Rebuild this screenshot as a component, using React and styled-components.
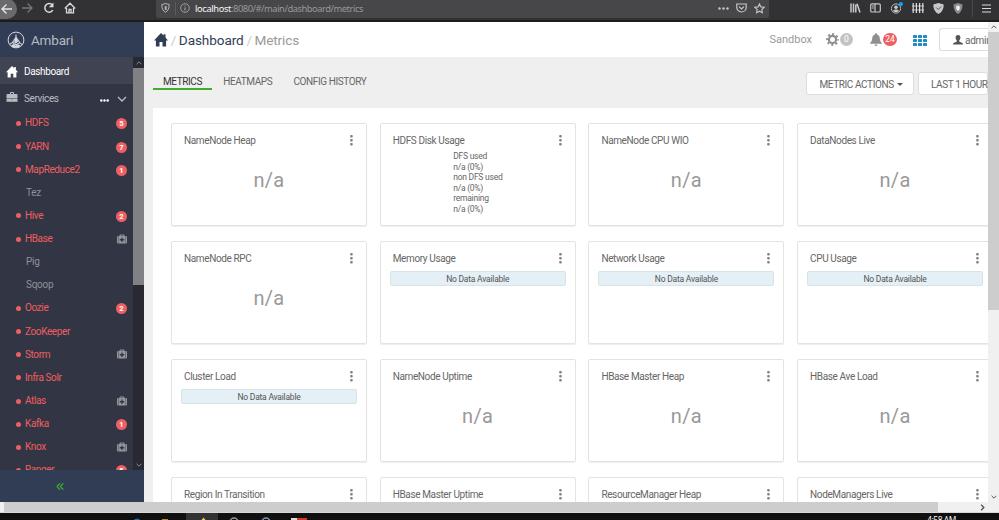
import React from 'react';
import styled, { createGlobalStyle, css } from 'styled-components';

const GlobalStyle = createGlobalStyle`
  * { box-sizing: border-box; }
  body {
    margin: 0;
    overflow: hidden;
    font-family: Roboto, "Liberation Sans", sans-serif;
    font-size: 10px;
    color: #666;
  }
  svg { display: block; flex: none; }
`;

const StScreen = styled.div`
  display: flex;
  flex-direction: column;
  width: 999px;
  height: 520px;
  overflow: hidden;
  background: #fff;
`;

/* browser toolbar */
const StBrowserBar = styled.div`
  display: flex;
  flex: none;
  height: 22px;
  background: #323234;
  border-bottom: 2px solid #1c1c1e;
`;
const StNavButtons = styled.div`
  display: flex;
  width: 156px;
  padding-top: 2px;
  gap: 9px;
`;
const StBackButton = styled.div`
  width: 17px;
  height: 20px;
  margin: -3px -5px 0 0;
  border-radius: 0 10px 10px 0;
  background: #6a6a6c;
  padding: 3px 0 0 1px;
`;
const StUrlField = styled.div`
  display: flex;
  align-items: center;
  width: 613px;
  height: 18px;
  padding: 0 4px 2px 5px;
  background: #474749;
  border-radius: 0 0 2px 2px;
`;
const StUrlDivider = styled.i`
  width: 1px;
  height: 13px;
  margin: 0 4px 0 5px;
  background: #5c5c5e;
`;
const StUrl = styled.span`
  flex: 1;
  margin: 2px 0 0 5px;
  font: 9.3px "Noto Sans", sans-serif;
  line-height: 16px;
  color: #98989a;
  letter-spacing: -.44px;
  b { font-weight: 400; color: #f5f5f6; letter-spacing: -.37px; }
`;
const StUrlActions = styled.div`
  display: flex;
  align-items: center;
  gap: 7px;
`;
const StExtensions = styled.div`
  display: flex;
  flex: 1;
  align-items: center;
  justify-content: flex-end;
  gap: 9px;
  height: 16px;
  padding-right: 8px;
`;
const StExtDivider = styled.i`
  width: 1px;
  height: 18px;
  background: #4a4a4c;
`;

/* page */
const StPage = styled.div`
  display: flex;
  flex: none;
  height: 480px;
  overflow: hidden;
`;
const StSidebar = styled.aside`
  display: flex;
  flex-direction: column;
  flex: none;
  width: 144px;
  background: #323544;
`;
const StBrand = styled.div`
  display: flex;
  align-items: center;
  flex: none;
  height: 35px;
  padding-left: 7px;
  gap: 6px;
  background: #313d54;
  color: #b5bac4;
  font-size: 13.5px;
  letter-spacing: -.2px;
`;
const StSideBody = styled.div`
  display: flex;
  flex: none;
  height: 413px;
`;
const StMenu = styled.nav`
  width: 133px;
  overflow: hidden;
`;
const StMenuHead = styled.div`
  display: flex;
  align-items: center;
  height: 27px;
  padding: 2px 6px 0 6px;
  gap: 6px;
  font-size: 10px;
  letter-spacing: -.38px;
  color: ${({ $active }) => ($active ? '#fff' : '#b8bdc3')};
  background: ${({ $active }) => ($active ? '#404351' : 'transparent')};
`;
const StMenuTools = styled.div`
  display: flex;
  align-items: center;
  gap: 8px;
  margin-left: auto;
  svg:first-child { margin-top: 4px; }
`;
const StServiceList = styled.div`
  padding-top: .3px;
`;
const StService = styled.div`
  display: flex;
  align-items: center;
  height: 23.15px;
  padding: 0 6px 0 16px;
  font-size: 10px;
  letter-spacing: ${({ $alert }) => ($alert ? '-.38px' : '-.25px')};
  color: ${({ $alert }) => ($alert ? '#ef5f62' : '#8f9299')};
`;
const StStatusDot = styled.i`
  width: 5px;
  height: 5px;
  margin: 1px ${({ $alert }) => ($alert ? '4px' : '5px')} 0 0;
  border-radius: 50%;
  background: ${({ $alert }) => ($alert ? '#ef5f62' : 'transparent')};
`;
const StServiceName = styled.span`flex: 1;`;
const StCount = styled.span`
  width: 11px;
  height: 11px;
  margin-top: 2px;
  border-radius: 50%;
  background: #ef5f62;
  color: #fff;
  font-size: 7.5px;
  font-weight: 700;
  line-height: 11px;
  letter-spacing: 0;
  text-align: center;
`;
const StSideScroll = styled.div`
  display: flex;
  flex-direction: column;
  justify-content: space-between;
  width: 11px;
  background: #282933;
`;
const StSideArrow = styled.div`
  display: flex;
  align-items: center;
  justify-content: center;
  height: 11px;
  color: #8c8c92;
`;
const StSideThumb = styled.div`
  height: 217px;
  margin-bottom: auto;
  background: #808185;
`;
const StSideFooter = styled.div`
  display: flex;
  align-items: center;
  flex: 1;
  padding: 1px 0 0 56px;
  background: #313d54;
`;

const StMain = styled.main`
  flex: 1;
  min-width: 0;
  overflow: hidden;
  background: #efefef;
`;
const StHeader = styled.header`
  display: flex;
  align-items: center;
  height: 35px;
  padding-left: 10px;
  background: #fff;
`;
const StCrumbs = styled.div`
  display: flex;
  align-items: center;
  flex: 1;
  gap: 2.7px;
  font-size: 13.6px;
  letter-spacing: -.15px;
  color: #999;
  strong { font-weight: 400; color: #313d54; letter-spacing: -.1px; }
  span { color: #ccc; }
`;
const StCluster = styled.span`
  margin-right: 14px;
  font-size: 11px;
  letter-spacing: 0;
  color: #999;
`;
const StHeaderBadge = styled.span`
  width: ${({ $red }) => ($red ? '14px' : '13px')};
  height: 13px;
  margin: 0 ${({ $red }) => ($red ? '16px' : '17px')} 0 1px;
  border-radius: 7px;
  background: ${({ $red }) => ($red ? '#ef5f62' : '#c3c3c3')};
  color: #fff;
  font-size: 8.5px;
  line-height: 13px;
  text-align: center;
`;
const buttonLook = css`
  display: flex;
  align-items: center;
  flex: none;
  height: 23px;
  border: 1px solid #ddd;
  border-radius: 3px;
  background: #fff;
  color: #666;
  font-size: 10px;
  letter-spacing: -.4px;
  white-space: nowrap;
`;
const StUserButton = styled.div`
  ${buttonLook}
  width: 49px;
  margin-left: 12px;
  padding: 1px 0 0 13px;
  gap: 2px;
  border-right: 0;
  border-radius: 3px 0 0 3px;
  letter-spacing: -.25px;
`;
const StTabsRow = styled.div`
  display: flex;
  align-items: flex-start;
  height: 51px;
  padding: 14px 0 0 9px;
`;
const StTabs = styled.div`
  display: flex;
  flex: 1;
`;
const StTab = styled.div`
  height: 19px;
  padding: 5px 10px 0;
  margin-right: 1.2px;
  font-size: 10px;
  line-height: 12px;
  letter-spacing: -.4px;
  color: ${({ $active }) => ($active ? '#333' : '#666')};
  border-bottom: 2px solid ${({ $active }) => ($active ? '#3fae2a' : 'transparent')};
`;
const StAction = styled.div`
  ${buttonLook}
  width: ${({ $width }) => $width}px;
  margin: 1px 0 0 4px;
  padding: 1px 0 0 ${({ $inset }) => $inset}px;
  gap: 3px;
`;
const StCaret = styled.i`
  border: 3px solid transparent;
  border-top-color: #555;
  border-bottom: 0;
`;
const StPanel = styled.section`
  display: grid;
  grid-template-columns: repeat(4, 196px);
  grid-auto-rows: 103px;
  gap: 15px 12.7px;
  margin-left: 9px;
  padding: 15px 0 0 18px;
  background: #fff;
`;
const StCard = styled.article`
  border: 1px solid #e3e3e3;
  border-radius: 2px;
  box-shadow: 0 1px 1px rgba(0, 0, 0, .07);
`;
const StCardHead = styled.div`
  display: flex;
  align-items: center;
  justify-content: space-between;
  height: 32px;
  padding: 0 13px 0 12px;
  font-size: 10px;
  letter-spacing: -.37px;
  color: #666;
`;
const StValue = styled.div`
  margin-top: 11px;
  font-size: 20px;
  line-height: 26px;
  letter-spacing: .35px;
  text-align: center;
  color: #999;
`;
const StNoData = styled.div`
  height: 15px;
  margin: -3px 9px 0;
  border: 1px solid #d6e3e8;
  border-radius: 2px;
  background: #e4f0f5;
  color: #555;
  font-size: 8.5px;
  line-height: 14px;
  letter-spacing: -.22px;
  text-align: center;
`;
const StUsage = styled.div`
  margin: -5px 0 0 72.5px;
  font-size: 8.5px;
  line-height: 10.5px;
  letter-spacing: -.24px;
  color: #666;
`;

/* window scrollbars */
const StPageScroll = styled.div`
  display: flex;
  flex-direction: column;
  flex: none;
  width: 11px;
  background: #f0f0f0;
`;
const StScrollArrow = styled.div`
  display: flex;
  align-items: center;
  justify-content: center;
  width: 11px;
  height: 10px;
  color: #505050;
`;
const StPageThumb = styled.div`
  flex: none;
  height: 278px;
  margin-bottom: auto;
  background: #cdcdcd;
`;
const StBottomScroll = styled.div`
  display: flex;
  flex: none;
  align-items: center;
  height: 11px;
  padding-left: 4px;
  background: #f0f0f0;
  border-bottom: 1px solid #d9d9d9;
`;
const StBottomThumb = styled.div`
  width: 934px;
  height: 10px;
  margin-right: 39px;
  background: #cdcdcd;
`;
const StTaskbar = styled.div`
  display: flex;
  flex: 1;
  overflow: hidden;
  background: #101010;
`;
const StClock = styled.span`
  margin: 1px 0 0 auto;
  padding-right: 43px;
  font: 8.5px/12px "Open Sans", sans-serif;
  letter-spacing: -.45px;
  color: #fff;
  white-space: nowrap;
`;

const Chevron = ({ dir, size = 6, weight = 1.6 }) => {
  const paths = { up: 'M1 7l4-4 4 4', down: 'M1 3l4 4 4-4', right: 'M3 1l4 4-4 4' };
  return (
    <svg width={size} height={size} viewBox="0 0 10 10" fill="none" stroke="currentColor" strokeWidth={weight}>
      <path d={paths[dir]} />
    </svg>
  );
};

const HomeIcon = ({ size, color }) => (
  <svg width={size} height={size} viewBox="0 0 14 14" fill={color}>
    <path d="M7 0l2.6 2.6V1.2h1.9v3.3L14 7.400h-1.9V13.500H8.500V9h-3v4.500H1.9V7.400H0z" />
  </svg>
);

const AmbariLogo = () => (
  <svg width="18" height="18" viewBox="0 0 18 18" fill="none" stroke="#d4d9e1">
    <circle cx="9" cy="9" r="7.9" strokeWidth="1" />
    <path d="M9 3.5v3M8 7h2M8 7.5L5.2 12M10 7.5l3 4.5M2.8 13.4c2-2.2 3-2.2 4.6-.6s3 .4 4-.4 2.4-.2 3.6 1.2" strokeWidth="1.1" />
    <path d="M8.2 6.5h1.7l1.2 4-2.3 2.2-1.7-1.4z M4 14.6l2.3-1.6 2.2 1.6 3-1.2 2.2 1.2-2.3 1.8H6z" fill="#d4d9e1" stroke="none" />
  </svg>
);

const Briefcase = () => (
  <svg width="12" height="13" viewBox="0 0 12 13" fill="#b8bdc3">
    <path d="M4 2V.8Q4 0 4.8 0h2.4Q8 0 8 .8V2h2.500q1 0 1 1v3.500H.5V3q0-1 1-1zm1 0h2V1H5zM.5 7h5v.6h1V7h5v2.800H.5z" />
  </svg>
);

const Medkit = () => (
  <svg width="10" height="10" viewBox="0 0 10 10">
    <path d="M3 2.200V1h4v1.200" fill="none" stroke="#93969a" />
    <rect x="0" y="2" width="10" height="7.500" rx="1" fill="#93969a" />
    <path d="M1.500 2v7.500M8.500 2v7.500" stroke="#323544" strokeWidth=".4" />
    <path d="M5 3.500v4.500M2.800 5.750h4.400" stroke="#323544" strokeWidth="1.300" />
  </svg>
);

const Gear = () => (
  <svg width="13" height="13" viewBox="0 0 13 13" fill="none" stroke="#8f8f8f">
    <circle cx="6.5" cy="6.5" r="3.6" strokeWidth="2.2" />
    <circle cx="6.5" cy="6.5" r="5.4" strokeWidth="2" strokeDasharray="2 2.241" strokeDashoffset="1" />
  </svg>
);

const Bell = () => (
  <svg width="12" height="13" viewBox="0 0 12 13" fill="#8f8f8f">
    <path d="M6 0l1 .8v.8c2 .6 2.6 2 2.8 4 .2 2 .8 3.4 2.2 4.6v.5H0v-.5c1.4-1.2 2-2.6 2.2-4.6.2-2 .8-3.4 2.8-4V.8zM4.5 11.4h3Q7 13 6 13t-1.500-1.600z" />
  </svg>
);

const GridIcon = () => (
  <svg width="14" height="13" viewBox="0 0 14 13" fill="#1e8bc3">
    {[0, 5, 10].map((x) => [2, 6, 10].map((y) => (
      <rect key={`${x}-${y}`} x={x} y={y} width="4" height="3" rx=".4" />
    )))}
  </svg>
);

const UserIcon = () => (
  <svg width="10" height="10" viewBox="0 0 10 10" fill="#555">
    <path d="M5 0c1.700 0 2.400 1.200 2.400 2.600C7.400 4 6.800 5 6.200 5.600v.8L9.400 8q.6.400.6 1.600H0Q0 8.400.6 8l3.200-1.600v-.8C3.200 5 2.600 4 2.600 2.600 2.600 1.200 3.300 0 5 0z" />
  </svg>
);

const Kebab = () => (
  <svg width="3" height="11" viewBox="0 0 3 11" fill="#808080">
    {[0, 4, 8].map((y) => <rect key={y} x=".2" y={y} width="2.5" height="2.5" rx=".8" />)}
  </svg>
);

const services = [
  { name: 'HDFS', alert: true, count: 5 },
  { name: 'YARN', alert: true, count: 7 },
  { name: 'MapReduce2', alert: true, count: 1 },
  { name: 'Tez' },
  { name: 'Hive', alert: true, count: 2 },
  { name: 'HBase', alert: true, maintenance: true },
  { name: 'Pig' },
  { name: 'Sqoop' },
  { name: 'Oozie', alert: true, count: 2 },
  { name: 'ZooKeeper', alert: true },
  { name: 'Storm', alert: true, maintenance: true },
  { name: 'Infra Solr', alert: true },
  { name: 'Atlas', alert: true, maintenance: true },
  { name: 'Kafka', alert: true, count: 1 },
  { name: 'Knox', alert: true, maintenance: true },
  { name: 'Ranger', alert: true, count: 5 },
];

const widgets = [
  { title: 'NameNode Heap', type: 'value' },
  { title: 'HDFS Disk Usage', type: 'usage' },
  { title: 'NameNode CPU WIO', type: 'value' },
  { title: 'DataNodes Live', type: 'value' },
  { title: 'NameNode RPC', type: 'value' },
  { title: 'Memory Usage', type: 'empty' },
  { title: 'Network Usage', type: 'empty' },
  { title: 'CPU Usage', type: 'empty' },
  { title: 'Cluster Load', type: 'empty' },
  { title: 'NameNode Uptime', type: 'value' },
  { title: 'HBase Master Heap', type: 'value' },
  { title: 'HBase Ave Load', type: 'value' },
  { title: 'Region In Transition' },
  { title: 'HBase Master Uptime' },
  { title: 'ResourceManager Heap' },
  { title: 'NodeManagers Live' },
];

const usageLines = ['DFS used', 'n/a (0%)', 'non DFS used', 'n/a (0%)', 'remaining', 'n/a (0%)'];

const BrowserBar = () => (
  <StBrowserBar>
    <StNavButtons>
      <StBackButton>
        <svg width="13" height="13" viewBox="0 0 13 13" fill="none" stroke="#e4e4e5" strokeWidth="1.4"><path d="M11 7H1M5.500 2.500L1 7l4.500 4.500" /></svg>
      </StBackButton>
      <svg width="13" height="12" viewBox="0 0 13 12" fill="none" stroke="#777779" strokeWidth="1.300"><path d="M1 6h10M6.500 1.500L11 6l-4.500 4.500" /></svg>
      <svg width="12" height="12" viewBox="0 0 12 12" fill="none" stroke="#dadadb" strokeWidth="1.500"><path d="M9.800 8.200A4.300 4.300 0 1 1 9.500 3.200" /><path d="M10.500.5v4.800H5.800z" fill="#dadadb" stroke="none" /></svg>
      <svg width="12" height="12" viewBox="0 0 12 12" fill="none" stroke="#dadadb" strokeWidth="1.300"><path d="M.8 6.500L6 1.200l5.200 5.300M2.500 6v4.800h7V6M5 10.500v-3h2v3" /></svg>
    </StNavButtons>
    <StUrlField>
      <svg width="9" height="10" viewBox="0 0 9 10" fill="none" stroke="#b7b7b9" strokeWidth="1"><path d="M.8 1.500L4.500.6l3.700.9C8.200 5.500 7 8 4.500 9.300 2 8 .8 5.500.8 1.500z" /><path d="M4.700 3v4" strokeWidth="1.800" /></svg>
      <StUrlDivider />
      <svg width="10" height="10" viewBox="0 0 10 10" fill="none" stroke="#a7a7a9"><circle cx="5" cy="5" r="4.300" strokeWidth=".9" /><path d="M5 4.400v3M5 2.400v1" strokeWidth="1.100" /></svg>
      <StUrl><b>localhost</b>:8080/#/main/dashboard/metrics</StUrl>
      <StUrlActions>
        <svg width="11" height="3" viewBox="0 0 11 3" fill="#c8c8c9"><circle cx="1.500" cy="1.500" r="1.200" /><circle cx="5.500" cy="1.500" r="1.200" /><circle cx="9.500" cy="1.500" r="1.200" /></svg>
        <svg width="11" height="10" viewBox="0 0 11 10" fill="none" stroke="#c8c8c9" strokeWidth="1.200"><path d="M.8 1h9.400v3.500a4.700 4.500 0 0 1-9.400 0zM3 3.600l2.500 2.400L8 3.600" /></svg>
        <svg width="11" height="11" viewBox="0 0 11 11" fill="none" stroke="#c8c8c9" strokeWidth="1.100"><path d="M5.500.9l1.400 3 3.300.4-2.400 2.200.6 3.300-2.900-1.600-2.900 1.600.6-3.300L.8 4.300l3.300-.4z" /></svg>
      </StUrlActions>
    </StUrlField>
    <StExtensions>
      <svg width="11" height="10" viewBox="0 0 11 10" fill="none" stroke="#c8c8c9" strokeWidth="1.500"><path d="M1 .5v9M3.500 .5v9M5.800 1.500v8M7 .8l3 8.700" /></svg>
      <svg width="11" height="10" viewBox="0 0 11 10" fill="none" stroke="#c8c8c9" strokeWidth="1.200"><rect x=".7" y=".8" width="9.600" height="8.200" rx="1.300" /><path d="M5 1v8M2 3h1.800M2 5h1.800" /></svg>
      <svg width="13" height="12" viewBox="0 0 13 12" fill="none" stroke="#b9b9bb"><circle cx="6" cy="6.500" r="4.600" strokeWidth="1" /><circle cx="6" cy="5.200" r="1.800" fill="#c8c8c9" stroke="none" /><path d="M3 9c.5-2 5.500-2 6 0-1.500 1.500-4.500 1.500-6 0z" fill="#c8c8c9" stroke="none" /><circle cx="11" cy="2" r="2" fill="#0aa5ff" stroke="none" /></svg>
      <svg width="12" height="10" viewBox="0 0 12 10" fill="none" stroke="#dededf" strokeWidth="1.200"><path d="M1.200 0v10M4.400 0v10M7.600 0v10M10.800 0v10" /><path d="M0 3h12M0 7h12" strokeWidth=".8" /></svg>
      <svg width="11" height="11" viewBox="0 0 11 11"><path d="M.3 1.500L5.500 0l5.200 1.500C10.700 6 9 9.300 5.500 11 2 9.300.3 6 .3 1.500z" fill="#c8c8c8" /><path d="M3.200 4.500l2 2 3-3" fill="none" stroke="#555" strokeWidth="1" /></svg>
      <svg width="10" height="11" viewBox="0 0 10 11"><path d="M.5 1.500L5 0l4.500 1.500C9.500 6 8 9.300 5 11 2 9.300.5 6 .5 1.500z" fill="#8b8b8d" /><path d="M5 2.200l2 1.500-.5 2.500L5 8 3.500 6.200 3 3.700z" fill="#eee" /></svg>
      <StExtDivider />
      <svg width="9" height="9" viewBox="0 0 9 9" stroke="#dadadb" strokeWidth="1.200"><path d="M0 1h9M0 4.500h9M0 8h9" /></svg>
    </StExtensions>
  </StBrowserBar>
);

const Sidebar = () => (
  <StSidebar>
    <StBrand><AmbariLogo />Ambari</StBrand>
    <StSideBody>
      <StMenu>
        <StMenuHead $active><HomeIcon size={12} color="#fff" />Dashboard</StMenuHead>
        <StMenuHead>
          <Briefcase />
          Services
          <StMenuTools>
            <svg width="9" height="3" viewBox="0 0 9 3" fill="#fff"><circle cx="1.300" cy="1.500" r="1.200" /><circle cx="4.500" cy="1.500" r="1.200" /><circle cx="7.700" cy="1.500" r="1.200" /></svg>
            <Chevron dir="down" size={10} weight={1.3} />
          </StMenuTools>
        </StMenuHead>
        <StServiceList>
          {services.map((service) => (
            <StService key={service.name} $alert={service.alert}>
              <StStatusDot $alert={service.alert} />
              <StServiceName>{service.name}</StServiceName>
              {service.count && <StCount>{service.count}</StCount>}
              {service.maintenance && <Medkit />}
            </StService>
          ))}
        </StServiceList>
      </StMenu>
      <StSideScroll>
        <StSideArrow><Chevron dir="up" /></StSideArrow>
        <StSideThumb />
        <StSideArrow><Chevron dir="down" /></StSideArrow>
      </StSideScroll>
    </StSideBody>
    <StSideFooter>
      <svg width="8" height="7" viewBox="0 0 8 7" fill="none" stroke="#3fae2a" strokeWidth="1.200"><path d="M4 .3L1 3.500l3 3.200M7.300.3l-3 3.200 3 3.200" /></svg>
    </StSideFooter>
  </StSidebar>
);

const WidgetCard = ({ title, type }) => (
  <StCard>
    <StCardHead>{title}<Kebab /></StCardHead>
    {type === 'value' && <StValue>n/a</StValue>}
    {type === 'empty' && <StNoData>No Data Available</StNoData>}
    {type === 'usage' && (
      <StUsage>{usageLines.map((line, i) => <div key={i}>{line}</div>)}</StUsage>
    )}
  </StCard>
);

const App = () => (
  <StScreen>
    <GlobalStyle />
    <BrowserBar />
    <StPage>
      <Sidebar />
      <StMain>
        <StHeader>
          <StCrumbs>
            <HomeIcon size={14} color="#313d54" />
            <span>/</span>
            <strong>Dashboard</strong>
            <span>/</span>
            Metrics
          </StCrumbs>
          <StCluster>Sandbox</StCluster>
          <Gear />
          <StHeaderBadge>0</StHeaderBadge>
          <Bell />
          <StHeaderBadge $red>24</StHeaderBadge>
          <GridIcon />
          <StUserButton><UserIcon />admin</StUserButton>
        </StHeader>
        <StTabsRow>
          <StTabs>
            <StTab $active>METRICS</StTab>
            <StTab>HEATMAPS</StTab>
            <StTab>CONFIG HISTORY</StTab>
          </StTabs>
          <StAction $width={108} $inset={12.5}>METRIC ACTIONS<StCaret /></StAction>
          <StAction $width={70} $inset={12}>LAST 1 HOUR</StAction>
        </StTabsRow>
        <StPanel>
          {widgets.map((widget) => <WidgetCard key={widget.title} {...widget} />)}
        </StPanel>
      </StMain>
      <StPageScroll>
        <StScrollArrow><Chevron dir="up" /></StScrollArrow>
        <StPageThumb />
        <StScrollArrow><Chevron dir="down" /></StScrollArrow>
      </StPageScroll>
    </StPage>
    <StBottomScroll>
      <StBottomThumb />
      <StScrollArrow><Chevron dir="right" size={7} weight={1.8} /></StScrollArrow>
    </StBottomScroll>
    <StTaskbar>
      <svg width="320" height="7" viewBox="0 0 320 7">
        <rect x="186" y="0" width="32" height="7" fill="#333" />
        <circle cx="137" cy="9" r="3.500" fill="#1b6fb0" />
        <rect x="162" y="6" width="6" height="2" fill="#b98a25" />
        <path d="M201.500 7l2-2.500 2 2.500z" fill="#e8d44d" />
        <circle cx="234" cy="9" r="4" fill="none" stroke="#999" strokeWidth="1.500" />
        <circle cx="266" cy="9" r="4" fill="none" stroke="#8296b4" strokeWidth="1.500" />
        <rect x="291" y="5" width="8" height="2" fill="#ddd" />
        <rect x="297" y="5" width="10" height="2" fill="#d8342b" />
      </svg>
      <StClock>4:58 AM</StClock>
    </StTaskbar>
  </StScreen>
);

export default App;
